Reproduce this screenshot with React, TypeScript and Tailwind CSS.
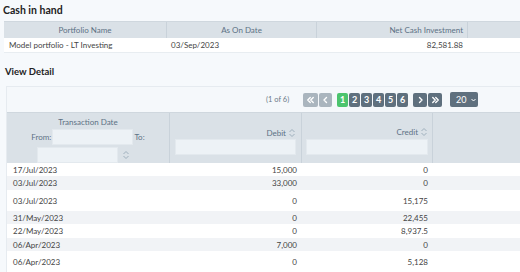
import React from "react";

const SortIcon = () => (
  <svg width="8" height="10" viewBox="0 0 8 10" className="inline-block">
    <path d="M1.5 4 L4 1.5 L6.5 4" fill="none" stroke="#9fb0bd" strokeWidth="1" />
    <path d="M1.5 6 L4 8.5 L6.5 6" fill="none" stroke="#9fb0bd" strokeWidth="1" />
  </svg>
);

const Chev = ({ dir, double }: { dir: "l" | "r"; double?: boolean }) => {
  const single = dir === "l" ? "M4.5 1.5 L2 4 L4.5 6.5" : "M2.5 1.5 L5 4 L2.5 6.5";
  const d2 =
    dir === "l"
      ? "M4 1.5 L1.5 4 L4 6.5 M7 1.5 L4.5 4 L7 6.5"
      : "M1.5 1.5 L4 4 L1.5 6.5 M4.5 1.5 L7 4 L4.5 6.5";
  return (
    <svg width={double ? 9 : 7} height="8" viewBox={double ? "0 0 8.5 8" : "0 0 7 8"}>
      <path d={double ? d2 : single} fill="none" stroke="white" strokeWidth="1.4" strokeLinecap="round" strokeLinejoin="round" />
    </svg>
  );
};

const rows: { d: string; debit: string; credit: string; h: string; bg: string }[] = [
  { d: "17/Jul/2023", debit: "15,000", credit: "0", h: "h-[13px]", bg: "bg-white" },
  { d: "03/Jul/2023", debit: "33,000", credit: "0", h: "h-[14px]", bg: "bg-[#f1f3f6]" },
  { d: "03/Jul/2023", debit: "0", credit: "15,175", h: "h-[21px]", bg: "bg-white" },
  { d: "31/May/2023", debit: "0", credit: "22,455", h: "h-[13px]", bg: "bg-[#f1f3f6]" },
  { d: "22/May/2023", debit: "0", credit: "8,937.5", h: "h-[14px]", bg: "bg-white" },
  { d: "06/Apr/2023", debit: "7,000", credit: "0", h: "h-[13px]", bg: "bg-[#f1f3f6]" },
  { d: "06/Apr/2023", debit: "0", credit: "5,128", h: "h-[21px]", bg: "bg-white" },
];

export default function App() {
  return (
    <div className="w-[520px] h-[272px] overflow-hidden bg-[#f6f9fc] text-[#333] font-['Lato',sans-serif]">
      <div className="pl-[3px] pt-[3px] h-[21px] text-[10.5px] font-bold text-[#222] leading-[14px]">Cash in hand</div>
      <div className="ml-[4px] text-[8px]">
        <div className="grid grid-cols-[163px_150px_151px_1fr] h-[17px] bg-[#dae1e7] text-[#5d7185] border-t border-[#cfd7de]">
          <div className="flex items-center justify-center border-r border-[#c9d2da]">Portfolio Name</div>
          <div className="flex items-center justify-center border-r border-[#c9d2da]">As On Date</div>
          <div className="flex items-center justify-end pr-[4px] border-r border-[#c9d2da]">Net Cash Investment</div>
          <div></div>
        </div>
        <div className="grid grid-cols-[163px_150px_151px_1fr] h-[15px] bg-white text-[#444] border-b border-[#e8edf1]">
          <div className="flex items-center pl-[5px]">Model portfolio - LT Investing</div>
          <div className="flex items-center pl-[4px]">03/Sep/2023</div>
          <div className="flex items-center justify-end pr-[5px]">82,581.88</div>
          <div></div>
        </div>
      </div>
      <div className="pl-[5px] pt-[12px] h-[33px] text-[9.5px] font-bold text-[#222] leading-[14px]">View Detail</div>
      <div className="ml-[6px] border-t border-l border-[#e6ebf0] bg-[#f5f8fb] text-[8px]">
        <div className="h-[25px] flex items-center pl-[259px]">
          <span className="text-[#6b7a88] text-[7.5px] w-[37px]">(1 of 6)</span>
          <div className="flex items-center gap-[1px]">
            <span className="w-[15px] h-[14px] rounded-[2px] bg-[#aab5be] flex items-center justify-center"><Chev dir="l" double /></span>
            <span className="w-[13px] h-[14px] rounded-[2px] bg-[#aab5be] flex items-center justify-center"><Chev dir="l" /></span>
            <span className="ml-[4px] w-[11px] h-[14px] rounded-[2px] bg-[#4cc46e] text-white flex items-center justify-center text-[9px] font-bold">1</span>
            {["2", "3", "4", "5", "6"].map((n) => (
              <span key={n} className="w-[11px] h-[14px] rounded-[2px] bg-[#5f707e] text-white flex items-center justify-center text-[9px] font-bold">{n}</span>
            ))}
            <span className="ml-[4px] w-[14px] h-[14px] rounded-[2px] bg-[#5f707e] flex items-center justify-center"><Chev dir="r" /></span>
            <span className="w-[14px] h-[14px] rounded-[2px] bg-[#5f707e] flex items-center justify-center"><Chev dir="r" double /></span>
            <span className="ml-[7px] w-[28px] h-[15px] rounded-[2px] bg-[#5f707e] text-white flex items-center pl-[6px] gap-[5px] text-[9px]">
              20
              <svg width="5" height="4" viewBox="0 0 5 4"><path d="M0.5 1 L2.5 3 L4.5 1" fill="none" stroke="white" strokeWidth="1" /></svg>
            </span>
          </div>
        </div>
        <div className="grid grid-cols-[163px_132px_131px_1fr] h-[51px] bg-[#dae1e7] text-[#5d7185] border-t border-[#cfd7de]">
          <div className="border-r border-[#c9d2da] flex flex-col items-center">
            <div className="h-[12px] mt-[3px] leading-[12px]">Transaction Date</div>
            <div className="flex items-center h-[17px]">
              <span className="mr-[1px]">From:</span>
              <div className="w-[81px] h-[16px] bg-[#edf2f6] border border-[#e3e9ee]"></div>
              <span className="ml-[1px]">To:</span>
            </div>
            <div className="flex items-center h-[17px] mt-[1px] -ml-[10px]">
              <div className="w-[81px] h-[16px] bg-[#edf2f6] border border-[#e3e9ee]"></div>
              <span className="ml-[4px]"><SortIcon /></span>
            </div>
          </div>
          <div className="border-r border-[#c9d2da] flex flex-col px-[5px]">
            <div className="mt-[15px] h-[10px] flex items-center justify-end gap-[2px]">Debit <SortIcon /></div>
            <div className="mt-[1px] h-[16px] bg-[#edf2f6] border border-[#e3e9ee]"></div>
          </div>
          <div className="border-r border-[#c9d2da] flex flex-col px-[4px]">
            <div className="mt-[14px] h-[10px] flex items-center justify-end gap-[2px]">Credit <SortIcon /></div>
            <div className="mt-[2px] h-[16px] bg-[#edf2f6] border border-[#e3e9ee]"></div>
          </div>
          <div></div>
        </div>
        {rows.map((r, i) => (
          <div key={i} className={`grid grid-cols-[163px_132px_131px_1fr] ${r.h} ${r.bg} text-[#444]`}>
            <div className="flex items-center pl-[6px]">{r.d}</div>
            <div className="flex items-center justify-end pr-[5px]">{r.debit}</div>
            <div className="flex items-center justify-end pr-[5px]">{r.credit}</div>
            <div></div>
          </div>
        ))}
      </div>
    </div>
  );
}
